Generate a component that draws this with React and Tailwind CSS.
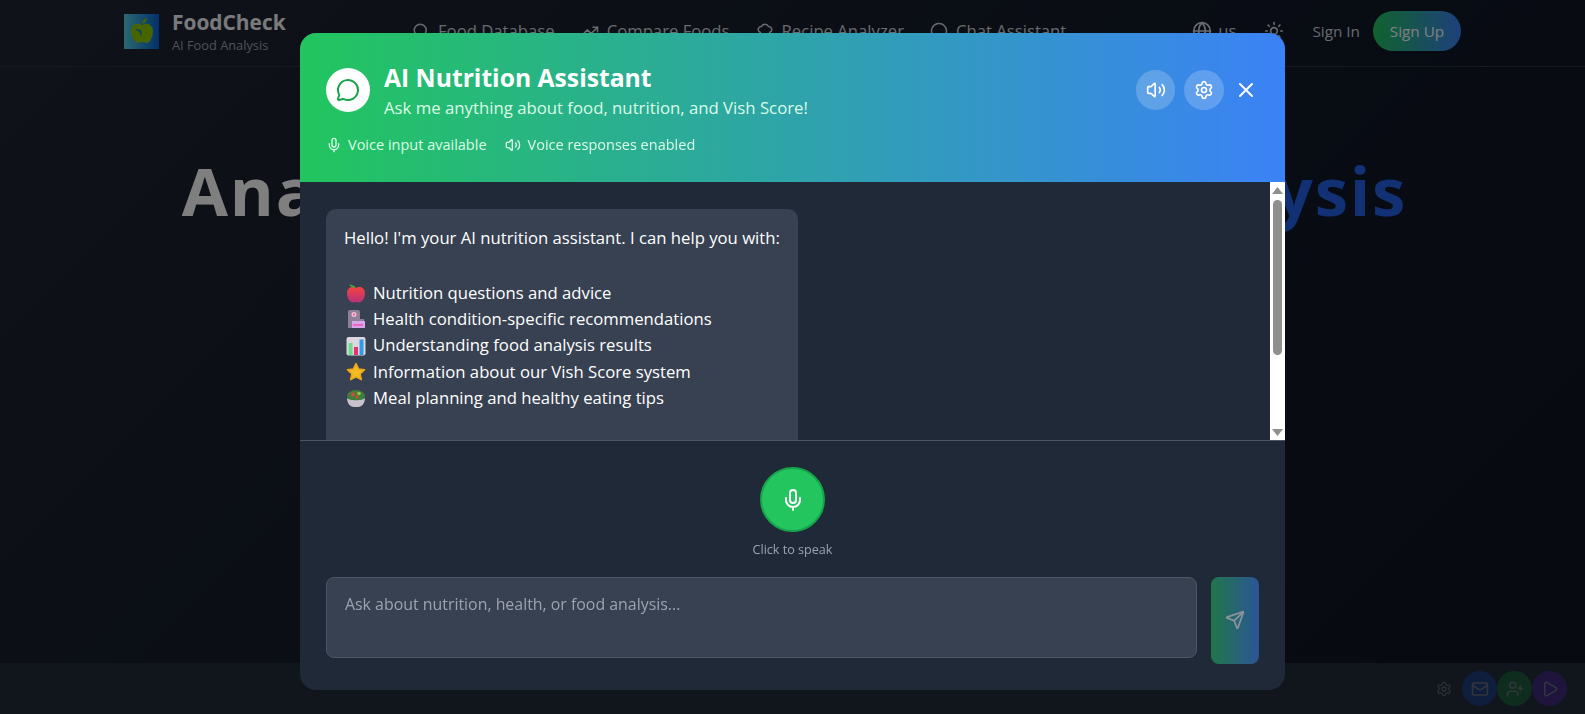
import { Globe, Sun, Search, TrendingUp, ChefHat, MessageCircle, Mic, Volume2, Settings, X, Send, Mail, UserPlus, Play } from 'lucide-react'

const font = "font-['Open_Sans','Noto_Sans',sans-serif]"

const Apple = () => (
    <svg width="20" height="20" viewBox="0 0 20 20">
        <defs>
            <linearGradient id="appleFill" x1="0" y1="0" x2="0" y2="1">
                <stop offset="0" stopColor="#f2433f" />
                <stop offset="1" stopColor="#b8307a" />
            </linearGradient>
        </defs>
        <path d="M10 5C7 3 1 4 1 10.500 1 15 4 19.500 7 19.500c1.300 0 2-.5 3-.5s1.700.5 3 .5c3 0 6-4.500 6-9C19 4 13 3 10 5z" fill="url(#appleFill)" />
        <path d="M10 5C9 3 6 1.500 3 1.500 4.500 3.500 7 5 10 5z" fill="#4ea33a" />
    </svg>
)

const Clinic = () => (
    <svg width="20" height="20" viewBox="0 0 20 20">
        <path d="M2 2.500 Q2 1 3.500 1 H12 Q14 1 14 3 V10 L18 10 V19 H2z" fill="#8f7f99" />
        <rect x="6" y="12" width="13" height="7" fill="#d9a6ea" />
        <rect x="7" y="15" width="10" height="2" fill="#ef62c6" />
        <circle cx="8" cy="5.500" r="2.500" fill="#f6bcd8" />
        <circle cx="8" cy="5.500" r="1" fill="#e2508c" />
    </svg>
)

const Chart = () => (
    <svg width="20" height="20" viewBox="0 0 20 20">
        <rect x="0.500" y="1" width="19" height="18.500" rx="2" fill="#dcd6de" />
        <rect x="2.500" y="7" width="4" height="12" fill="#6fdc8c" />
        <rect x="8" y="11" width="4" height="8" fill="#e8326f" />
        <rect x="13.500" y="3.500" width="4" height="15.500" fill="#2e9be8" />
    </svg>
)

const Star = () => (
    <svg width="20" height="20" viewBox="0 0 20 20">
        <path d="M10 1.500l2.600 5.400 6 .8-4.400 4.100 1.100 5.900L10 14.800l-5.300 2.900 1.100-5.900L1.400 7.700l6-.8z" fill="#f5b921" stroke="#eaa81a" strokeWidth="1.500" strokeLinejoin="round" />
    </svg>
)

const Salad = () => (
    <svg width="20" height="20" viewBox="0 0 20 20">
        <ellipse cx="10" cy="8" rx="9" ry="6" fill="#3f7d3c" />
        <circle cx="7" cy="6.500" r="2" fill="#d9483b" />
        <circle cx="13" cy="5.500" r="1.800" fill="#9bc53d" />
        <circle cx="11" cy="9" r="1.500" fill="#d9483b" />
        <path d="M1 10 C3 13 17 13 19 10 C19 15 16 19 12 19 H8 C4 19 1 15 1 10z" fill="#c9c2cc" />
    </svg>
)

const topics = [
    { icon: <Apple />, label: 'Nutrition questions and advice' },
    { icon: <Clinic />, label: 'Health condition-specific recommendations' },
    { icon: <Chart />, label: 'Understanding food analysis results' },
    { icon: <Star />, label: 'Information about our Vish Score system' },
    { icon: <Salad />, label: 'Meal planning and healthy eating tips' },
]

const navLinks = [
    { icon: <Search size={18} />, label: 'Food Database' },
    { icon: <TrendingUp size={18} />, label: 'Compare Foods' },
    { icon: <ChefHat size={18} />, label: 'Recipe Analyzer' },
    { icon: <MessageCircle size={18} />, label: 'Chat Assistant' },
]

const Page = () => (
    <div className="h-[714px] flex flex-col bg-[linear-gradient(135deg,#1f2532,#111827_60%,#0f1420)]">
        <header className="h-[67px] shrink-0 border-b border-[#2b3240] flex items-center pb-[4px] pl-[124px] pr-[124px]">
            <div className="w-[35px] h-[35px] mr-[13px] bg-[linear-gradient(to_right,#54d0e0,#0860d6)] flex items-center justify-center">
                <svg width="24" height="28" viewBox="0 0 24 28">
                    <path d="M12 8C7 5 1 8 1 14c0 6 4 12 8 12 1.500 0 2-1 3.500-1S15 26 17 26c3 0 6-6 6-12 0-6-6-9-11-6z" fill="#8cc800" />
                    <path d="M12 7c0-3 2-5 5-6 0 3-2 5-5 6z" fill="#8cc800" />
                    <path d="M5 13c3-2 7-1 7 3 0 2-1 3-2 3 1-3-1-5-5-6z" fill="#2c8f9e" />
                </svg>
            </div>
            <div className="w-[240px]">
                <div className="text-[20.9px] font-bold text-[#f3f4f6] leading-[28px]">FoodCheck</div>
                <div className="text-[12.8px] text-[#9ca3af] leading-[18px]">AI Food Analysis</div>
            </div>
            <nav className="flex items-center gap-[26px] text-[#d1d5db] text-[16.7px]">
                {navLinks.map((link) => (
                    <div key={link.label} className="flex items-center gap-2">
                        {link.icon}
                        {link.label}
                    </div>
                ))}
            </nav>
            <div className="ml-auto flex items-center text-[#d1d5db]">
                <Globe size={20} />
                <span className="ml-[6px] mr-[28px] text-[16.7px]">us</span>
                <Sun size={20} />
                <span className="ml-[28px] text-[15.3px]">Sign In</span>
                <button className="ml-[13px] w-[88px] h-10 rounded-full bg-[linear-gradient(to_right,#22c55e,#3b82f6)] text-[15.3px] text-white">Sign Up</button>
            </div>
        </header>
        <main className="flex-1 pt-[83px] pl-[4px] text-center text-[67px] font-bold leading-[80px] tracking-[1.8px]">
            <span className="text-white">Analyze Your Food with </span>
            <span className="text-[#2563eb]">AI Analysis</span>
        </main>
        <footer className="h-[51px] shrink-0 bg-[#222c38] flex items-center justify-end pr-[18px]">
            <Settings size={16} className="text-[#565f6a] mr-[10px]" />
            <div className="w-[35px] h-[35px] rounded-full bg-[#1e3c78] flex items-center justify-center text-[#646e78]"><Mail size={18} /></div>
            <div className="w-[35px] h-[35px] rounded-full bg-[#1e5a3c] flex items-center justify-center text-[#646e78]"><UserPlus size={18} /></div>
            <div className="w-[35px] h-[35px] rounded-full bg-[#3c2878] flex items-center justify-center text-[#646e78]"><Play size={18} /></div>
        </footer>
    </div>
)

const Scrollbar = () => (
    <div className="w-[15px] shrink-0 bg-white flex flex-col items-center pt-[5px] pb-[4px]">
        <svg width="11" height="7" viewBox="0 0 11 7"><path d="M5.500 0 L11 7 H0z" fill="#8f8f8f" /></svg>
        <div className="mt-[6px] w-[9px] h-[155px] rounded-full bg-[#8f8f8f]"></div>
        <svg className="mt-auto" width="11" height="7" viewBox="0 0 11 7"><path d="M0 0 H11 L5.500 7z" fill="#8f8f8f" /></svg>
    </div>
)

const ChatModal = () => (
    <div className="fixed inset-0 bg-black/50 flex items-start justify-center pt-[33px]">
        <div className="w-[985px] h-[657px] bg-[#1f2937] rounded-2xl overflow-hidden flex flex-col">
            <div className="h-[149px] shrink-0 px-[26px] pt-[26px] bg-[linear-gradient(to_right,#22c55e,#3b82f6)] text-white">
                <div className="flex items-center">
                    <div className="w-11 h-11 rounded-full bg-white flex items-center justify-center text-[#16a34a]">
                        <MessageCircle size={24} />
                    </div>
                    <div className="ml-[14px] flex-1 pt-[3px]">
                        <h2 className="text-[24.7px] font-bold leading-[32px]">AI Nutrition Assistant</h2>
                        <p className="text-[16.76px] leading-[27px] text-[#dcfce7]">Ask me anything about food, nutrition, and Vish Score!</p>
                    </div>
                    <button className="w-[39px] h-10 rounded-full bg-white/20 flex items-center justify-center"><Volume2 size={20} /></button>
                    <button className="ml-[9px] w-10 h-10 rounded-full bg-white/20 flex items-center justify-center"><Settings size={20} /></button>
                    <button className="ml-[10px] mr-[1px] w-6 h-6 flex items-center justify-center"><X size={24} /></button>
                </div>
                <div className="mt-[14px] flex items-center text-[14.5px] leading-[20px] text-[#dcfce7]">
                    <Mic size={16} />
                    <span className="ml-[6px] mr-[18px]">Voice input available</span>
                    <Volume2 size={16} />
                    <span className="ml-[7px]">Voice responses enabled</span>
                </div>
            </div>
            <div className="h-[258px] shrink-0 flex">
                <div className="flex-1 overflow-hidden pl-[26px] pt-[27px]">
                    <div className="w-[472px] h-[300px] rounded-[10px] bg-[#374151] px-[18px] pt-[16px] text-white text-[16.7px] leading-[26.35px]">
                        <p>Hello! I'm your AI nutrition assistant. I can help you with:</p>
                        <p className="h-[28.35px]"></p>
                        {topics.map((topic) => (
                            <div key={topic.label} className="flex items-center gap-[7px] h-[26.35px] pl-[2px]">
                                {topic.icon}
                                {topic.label}
                            </div>
                        ))}
                    </div>
                </div>
                <Scrollbar />
            </div>
            <div className="flex-1 border-t border-[#4b5563] px-[26px] pt-[26px]">
                <div className="flex flex-col items-center">
                    <button className="w-[65px] h-[65px] rounded-full bg-[#22c55e] border-2 border-[#16a34a] flex items-center justify-center text-white"><Mic size={24} /></button>
                    <span className="mt-[10px] text-[12.6px] leading-[16px] text-[#9ca3af]">Click to speak</span>
                </div>
                <div className="mt-[19px] flex gap-[14px]">
                    <div className="flex-1 h-[81px] rounded-lg bg-[#374151] border border-[#4b5563] px-[18px] pt-[15px] text-[15.9px] text-[#9ca3af]">Ask about nutrition, health, or food analysis...</div>
                    <button className="w-12 h-[87px] rounded-lg bg-[linear-gradient(to_right,#22c55e,#3b82f6)] opacity-50 flex items-center justify-center text-white"><Send size={20} className="-mt-[1px]" /></button>
                </div>
            </div>
        </div>
    </div>
)

const App = () => (
    <div className={`relative h-[714px] overflow-hidden ${font}`}>
        <Page />
        <ChatModal />
    </div>
)

export default App
